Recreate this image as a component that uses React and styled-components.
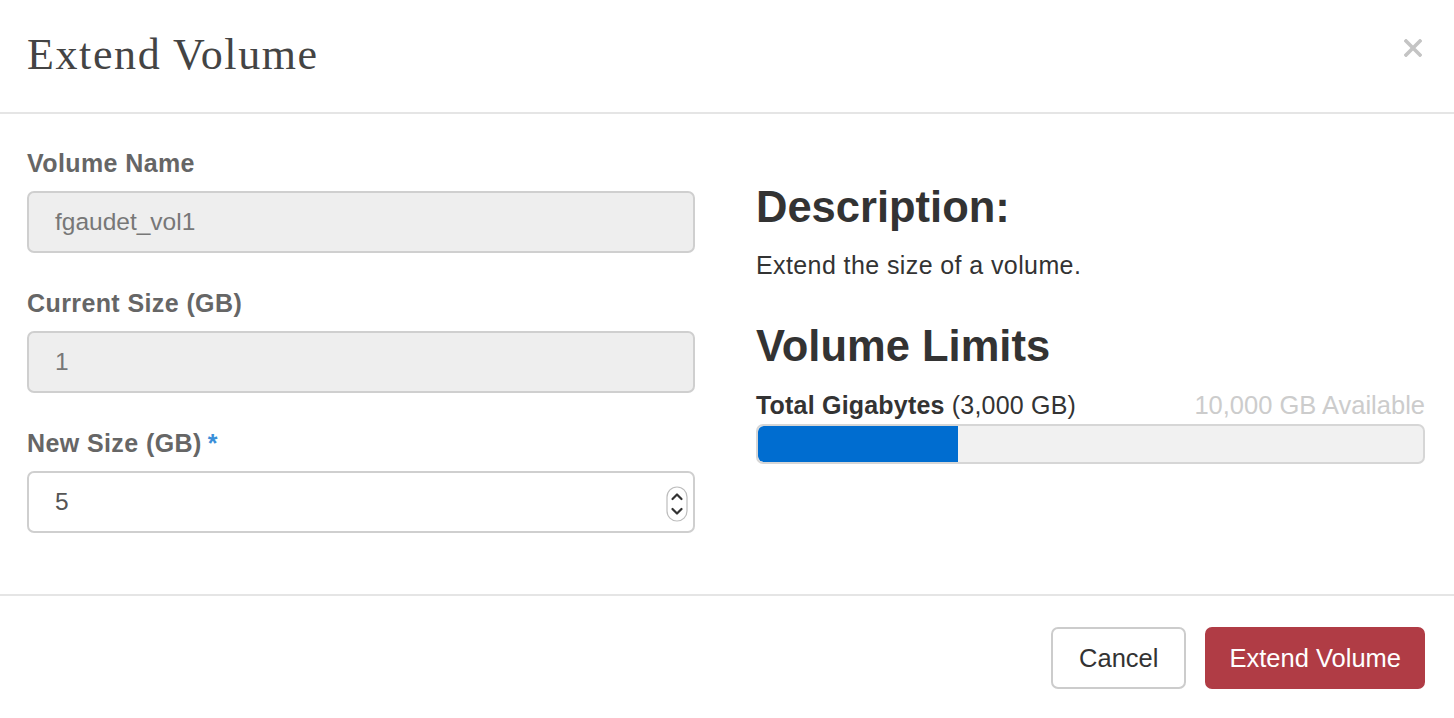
import React from 'react';
import styled, { createGlobalStyle } from 'styled-components';

const GlobalStyle = createGlobalStyle`
  html, body {
    margin: 0;
    padding: 0;
    background: #fff;
  }
  body {
    font-family: "Liberation Sans", Arial, sans-serif;
    color: #333;
  }
  * { box-sizing: border-box; }
`;

const Modal = styled.div`
  width: 1454px;
  height: 718px;
  display: flex;
  flex-direction: column;
  background: #fff;
`;

const Header = styled.div`
  height: 114px;
  flex: none;
  display: flex;
  justify-content: space-between;
  align-items: center;
  padding: 0 32px 4px 27px;
  border-bottom: 2px solid #e5e5e5;
`;

const Title = styled.h1`
  margin: 0;
  font-family: "Liberation Serif", "Times New Roman", serif;
  font-weight: 400;
  font-size: 44px;
  letter-spacing: 1.6px;
  color: #444;
`;

const Close = styled.button`
  align-self: flex-start;
  margin-top: 39px;
  padding: 0;
  border: 0;
  background: none;
  width: 18px;
  height: 18px;
  line-height: 0;
  cursor: pointer;
`;

const Body = styled.div`
  flex: 1;
  display: grid;
  grid-template-columns: 668px 1fr;
  column-gap: 61px;
  padding: 34px 29px 0 27px;
`;

const Column = styled.div`
  display: flex;
  flex-direction: column;
`;

const Label = styled.label`
  display: block;
  font-size: 25px;
  letter-spacing: 0.4px;
  line-height: 30px;
  font-weight: 700;
  color: #666;
  margin-bottom: 13px;
`;

const Required = styled.span`
  color: #3a8fd9;
  margin-left: 6px;
`;

const InputBox = styled.div`
  position: relative;
  height: 62px;
  margin-bottom: 35px;
  display: flex;
  align-items: center;
  padding: 0 26px;
  border: 2px solid #cfcfcf;
  border-radius: 7px;
  background: ${p => (p.$disabled ? '#eeeeee' : '#fff')};
  color: ${p => (p.$disabled ? '#777' : '#555')};
  font-size: 24.5px;
`;

const Spinner = styled.span`
  position: absolute;
  right: 5px;
  top: 13px;
  line-height: 0;
`;

const Heading = styled.h3`
  margin: 0;
  font-family: "Liberation Sans", Arial, sans-serif;
  font-weight: 700;
  font-size: 43.5px;
  line-height: 50px;
  color: #333;
  margin-top: ${p => p.$top || 0}px;
`;

const Text = styled.p`
  margin: 18px 0 0;
  font-size: 25px;
  letter-spacing: 0.4px;
  line-height: 30px;
  color: #333;
`;

const LimitRow = styled.div`
  margin-top: 19px;
  display: flex;
  justify-content: space-between;
  align-items: baseline;
  font-size: 25px;
  letter-spacing: 0.2px;
  line-height: 30px;
`;

const Strong = styled.strong`
  font-weight: 700;
`;

const Available = styled.span`
  color: #cccccc;
  font-size: 25.5px;
  letter-spacing: 0;
`;

const Bar = styled.div`
  margin-top: 4px;
  height: 40px;
  border: 2px solid #d6d6d6;
  border-radius: 7px;
  background: #f1f1f1;
  overflow: hidden;
`;

const Fill = styled.div`
  height: 100%;
  background: #006dd0;
  border-radius: 6px 0 0 6px;
`;

const Footer = styled.div`
  height: 124px;
  flex: none;
  display: flex;
  justify-content: flex-end;
  align-items: flex-start;
  gap: 19px;
  padding: 31px 29px 0 0;
  border-top: 2px solid #e5e5e5;
`;

const Button = styled.button`
  height: 62px;
  padding: 0 ${p => (p.$primary ? 22 : 26)}px;
  border-radius: 7px;
  font-family: "Liberation Sans", Arial, sans-serif;
  font-size: 25.5px;
  cursor: pointer;
  border: 2px solid ${p => (p.$primary ? '#b03c45' : '#cccccc')};
  background: ${p => (p.$primary ? '#b03c45' : '#fff')};
  color: ${p => (p.$primary ? '#fff' : '#333')};
`;

function SpinIcon() {
  return (
    <svg width="22" height="36" viewBox="0 0 22 36">
      <rect x="1" y="1" width="20" height="34" rx="10" fill="#fff" stroke="#bdbdbd" strokeWidth="1.2" />
      <path d="M6.5 13 L11 8.5 L15.5 13" fill="none" stroke="#333" strokeWidth="2.2" strokeLinecap="round" strokeLinejoin="round" />
      <path d="M6.5 23 L11 27.5 L15.5 23" fill="none" stroke="#333" strokeWidth="2.2" strokeLinecap="round" strokeLinejoin="round" />
    </svg>
  );
}

export default function App() {
  const used = 3000;
  const total = 10000;
  return (
    <>
      <GlobalStyle />
      <Modal>
        <Header>
          <Title>Extend Volume</Title>
          <Close aria-label="Close">
            <svg width="18" height="18" viewBox="0 0 18 18">
              <path d="M2 2 L16 16 M16 2 L2 16" stroke="#c4c4c4" strokeWidth="3.6" strokeLinecap="square" />
            </svg>
          </Close>
        </Header>
        <Body>
          <Column>
            <Label>Volume Name</Label>
            <InputBox $disabled>fgaudet_vol1</InputBox>
            <Label>Current Size (GB)</Label>
            <InputBox $disabled>1</InputBox>
            <Label>
              New Size (GB)<Required>*</Required>
            </Label>
            <InputBox>
              5
              <Spinner>
                <SpinIcon />
              </Spinner>
            </InputBox>
          </Column>
          <Column>
            <Heading $top={34}>Description:</Heading>
            <Text>Extend the size of a volume.</Text>
            <Heading $top={41}>Volume Limits</Heading>
            <LimitRow>
              <span>
                <Strong>Total Gigabytes</Strong> (3,000 GB)
              </span>
              <Available>10,000 GB Available</Available>
            </LimitRow>
            <Bar>
              <Fill style={{ width: `${(used / total) * 100}%` }} />
            </Bar>
          </Column>
        </Body>
        <Footer>
          <Button>Cancel</Button>
          <Button $primary>Extend Volume</Button>
        </Footer>
      </Modal>
    </>
  );
}
